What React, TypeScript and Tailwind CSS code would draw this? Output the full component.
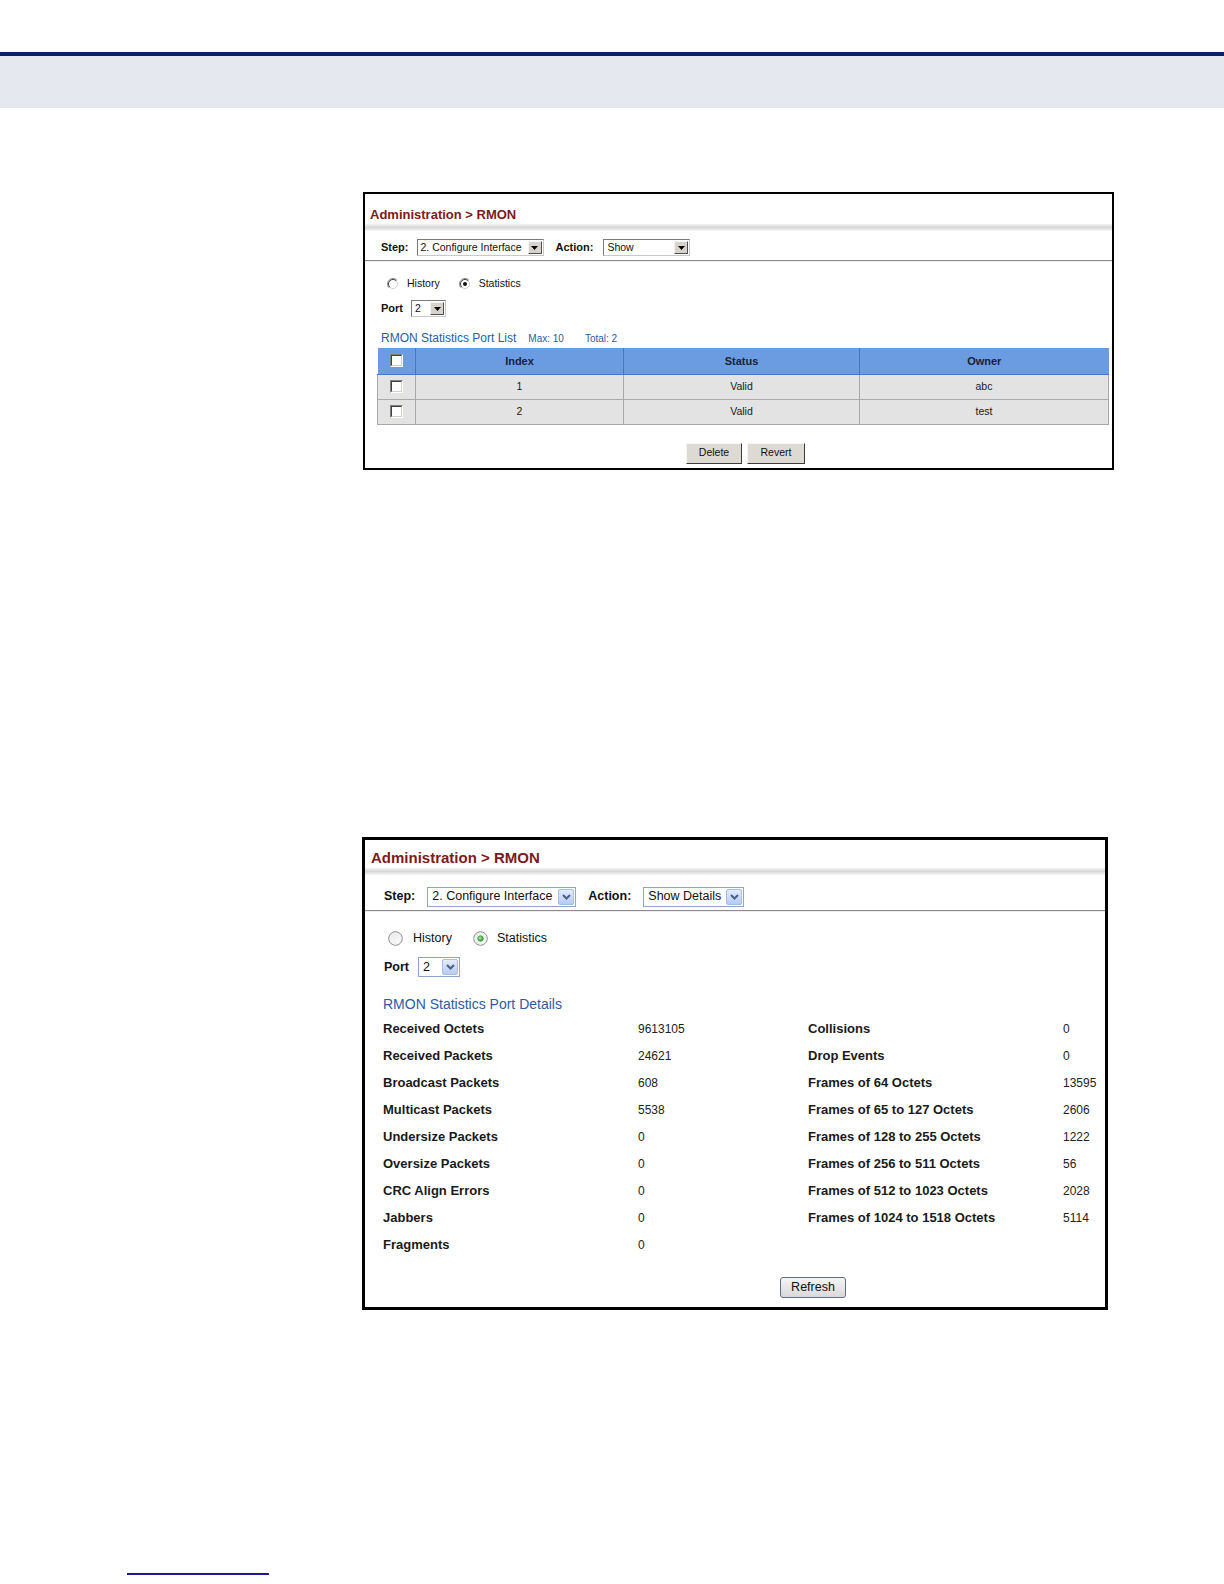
import React from 'react';

const FONT = "font-['Liberation_Sans',Arial,sans-serif]";

function ClassicSelect({ value, w }: { value: string; w: string }) {
  return (
    <div className={`${w} flex h-[17px] items-center border border-t-[#7a7a7a] border-l-[#7a7a7a] border-r-[#c8c8c8] border-b-[#c8c8c8] bg-white`}>
      <span className="flex-1 truncate pl-[3px] text-[10.5px] leading-none text-[#111]">{value}</span>
      <span className="mr-px flex h-[13px] w-[14px] items-center justify-center border border-t-[#f4f4f4] border-l-[#f4f4f4] border-r-[#505050] border-b-[#505050] bg-[#d6d3cc]">
        <svg width="7" height="4" viewBox="0 0 7 4">
          <path d="M0 0h7L3.5 4z" fill="#000" />
        </svg>
      </span>
    </div>
  );
}

function VistaSelect({ value, w }: { value: string; w: string }) {
  return (
    <div className={`${w} flex h-[20px] items-center border border-[#8ea6c8] bg-white p-px`}>
      <span className="flex-1 truncate pl-[3px] text-[12.5px] leading-none text-[#111]">{value}</span>
      <span className="flex h-full w-[16px] items-center justify-center rounded-[2px] border border-[#a6bde6] bg-linear-to-b from-[#e4ecfc] to-[#b6cbf3]">
        <svg width="9" height="6" viewBox="0 0 9 6">
          <path d="M1 1l3.5 3.5L8 1" stroke="#4a5f86" strokeWidth="2" fill="none" />
        </svg>
      </span>
    </div>
  );
}

function ClassicRadio({ checked }: { checked?: boolean }) {
  return (
    <svg width="12" height="12" viewBox="0 0 12 12">
      <circle cx="6" cy="6" r="5" fill="#fff" />
      <path d="M2.11 9.89A5.5 5.5 0 0 1 9.89 2.11" stroke="#8a8a8a" fill="none" />
      <path d="M2.8 9.2A4.5 4.5 0 0 1 9.2 2.8" stroke="#404040" fill="none" />
      <path d="M9.2 2.8A4.5 4.5 0 0 1 2.8 9.2" stroke="#d4d0c8" fill="none" />
      {checked && <circle cx="6" cy="6" r="2" fill="#111" />}
    </svg>
  );
}

function VistaRadio({ checked }: { checked?: boolean }) {
  return (
    <svg width="15" height="15" viewBox="0 0 15 15">
      <defs>
        <linearGradient id="vr" x1="0" y1="0" x2="1" y2="1">
          <stop offset="0" stopColor="#e6e6e6" />
          <stop offset="1" stopColor="#ffffff" />
        </linearGradient>
        <radialGradient id="vg" cx="0.4" cy="0.4" r="0.6">
          <stop offset="0" stopColor="#a6f09a" />
          <stop offset="1" stopColor="#2c9a2a" />
        </radialGradient>
      </defs>
      <circle cx="7.5" cy="7.5" r="6.8" fill="url(#vr)" stroke="#8c8e8f" strokeWidth="1" />
      <circle cx="7.5" cy="7.5" r="5.3" fill="none" stroke="#f2f2f2" strokeWidth="1" />
      {checked && <circle cx="7.5" cy="7.5" r="2.8" fill="url(#vg)" stroke="#3d8a3a" strokeWidth="0.6" />}
    </svg>
  );
}

function ClassicCheckbox() {
  return (
    <span className="block h-[13px] w-[13px] border border-t-[#808080] border-l-[#808080] border-r-white border-b-white">
      <span className="block h-full w-full border border-t-[#404040] border-l-[#404040] border-r-[#d4d0c8] border-b-[#d4d0c8] bg-white" />
    </span>
  );
}

function ClassicButton({ label, w }: { label: string; w: string }) {
  return (
    <div className={`${w} flex h-[21px] items-center justify-center border border-t-[#f5f5f5] border-l-[#f5f5f5] border-r-[#3c3c3c] border-b-[#3c3c3c] bg-[#dcdad3] text-[10.5px] text-[#111]`}>
      {label}
    </div>
  );
}

function SepBar() {
  return <div className="h-[7px] bg-linear-to-b from-[#f3f3f3] via-[#d8d8d8] to-[#f6f6f6]" />;
}

function ListPanel() {
  const rows = [
    { index: '1', status: 'Valid', owner: 'abc' },
    { index: '2', status: 'Valid', owner: 'test' },
  ];
  return (
    <div className="ml-[363px] h-[278px] w-[751px] border-2 border-black bg-white">
      <div className="h-[30px] pl-[5px] pt-[13px]">
        <div className="text-[13px] font-bold leading-[16px] text-[#7d1a1a]">Administration &gt; RMON</div>
      </div>
      <SepBar />
      <div className="flex h-[29px] items-center gap-[6px] pl-[16px] pt-[4px]">
        <span className="text-[11px] font-bold text-[#111]">Step:</span>
        <ClassicSelect value="2. Configure Interface" w="w-[127px] ml-[2px]" />
        <span className="ml-[6px] text-[11px] font-bold text-[#111]">Action:</span>
        <ClassicSelect value="Show" w="w-[87px] ml-[4px]" />
      </div>
      <div className="h-px bg-[#8c8c8c]" />
      <div className="h-px bg-[#eeeeee]" />
      <div className="mt-[14px] flex h-[16px] items-center pl-[22px] text-[10.5px] text-[#111]">
        <ClassicRadio />
        <span className="ml-[8px]">History</span>
        <span className="ml-[19px]"><ClassicRadio checked /></span>
        <span className="ml-[8px]">Statistics</span>
      </div>
      <div className="mt-[8px] flex h-[17px] items-center gap-[6px] pl-[16px]">
        <span className="text-[11px] font-bold text-[#111]">Port</span>
        <ClassicSelect value="2" w="w-[35px] ml-[2px]" />
      </div>
      <div className="mt-[14px] flex h-[14px] items-end pl-[16px] text-[#2b5ca5]">
        <span className="text-[12px] leading-[14px]">RMON Statistics Port List</span>
        <span className="ml-[12px] text-[10px] leading-[13px]">Max: 10</span>
        <span className="ml-[21px] text-[10px] leading-[13px]">Total: 2</span>
      </div>
      <table className="ml-[12px] mt-[3px] w-[732px] border-collapse text-[10.5px]">
        <thead>
          <tr className="h-[26px] bg-[#6b9be0] text-[11px] font-bold text-[#15233d]">
            <th className="w-[38px] border-b border-r border-[#4576c0]">
              <span className="flex justify-center"><ClassicCheckbox /></span>
            </th>
            <th className="w-[208px] border-b border-r border-[#4576c0]">Index</th>
            <th className="w-[236px] border-b border-r border-[#4576c0]">Status</th>
            <th className="border-b border-[#4576c0]">Owner</th>
          </tr>
        </thead>
        <tbody>
          {rows.map((r) => (
            <tr key={r.index} className="h-[25px] bg-[#e3e3e3] text-center text-[#1a1a1a]">
              <td className="border border-[#a9a9a9]">
                <span className="flex justify-center"><ClassicCheckbox /></span>
              </td>
              <td className="border border-[#a9a9a9]">{r.index}</td>
              <td className="border border-[#a9a9a9]">{r.status}</td>
              <td className="border border-[#a9a9a9]">{r.owner}</td>
            </tr>
          ))}
        </tbody>
      </table>
      <div className="ml-[321px] mt-[18px] flex gap-[5px]">
        <ClassicButton label="Delete" w="w-[56px]" />
        <ClassicButton label="Revert" w="w-[58px]" />
      </div>
    </div>
  );
}

const left: [string, string][] = [
  ['Received Octets', '9613105'],
  ['Received Packets', '24621'],
  ['Broadcast Packets', '608'],
  ['Multicast Packets', '5538'],
  ['Undersize Packets', '0'],
  ['Oversize Packets', '0'],
  ['CRC Align Errors', '0'],
  ['Jabbers', '0'],
  ['Fragments', '0'],
];

const right: [string, string][] = [
  ['Collisions', '0'],
  ['Drop Events', '0'],
  ['Frames of 64 Octets', '13595'],
  ['Frames of 65 to 127 Octets', '2606'],
  ['Frames of 128 to 255 Octets', '1222'],
  ['Frames of 256 to 511 Octets', '56'],
  ['Frames of 512 to 1023 Octets', '2028'],
  ['Frames of 1024 to 1518 Octets', '5114'],
  ['', ''],
];

function DetailsPanel() {
  return (
    <div className="ml-[362px] mt-[367px] h-[473px] w-[746px] border-[3px] border-black bg-white">
      <div className="h-[28px] pl-[6px] pt-[9px]">
        <div className="text-[15px] font-bold leading-[18px] text-[#7d1a1a]">Administration &gt; RMON</div>
      </div>
      <SepBar />
      <div className="flex h-[35px] items-center pl-[19px] pt-[8px]">
        <span className="text-[12.5px] font-bold text-[#111]">Step:</span>
        <VistaSelect value="2. Configure Interface" w="w-[149px] ml-[12px]" />
        <span className="ml-[12px] text-[12.5px] font-bold text-[#111]">Action:</span>
        <VistaSelect value="Show Details" w="w-[101px] ml-[12px]" />
      </div>
      <div className="h-px bg-[#8c8c8c]" />
      <div className="h-px bg-[#eeeeee]" />
      <div className="mt-[18px] flex h-[16px] items-center pl-[23px] text-[12.5px] text-[#111]">
        <VistaRadio />
        <span className="ml-[10px]">History</span>
        <span className="ml-[21px]"><VistaRadio checked /></span>
        <span className="ml-[9px]">Statistics</span>
      </div>
      <div className="mt-[11px] flex h-[20px] items-center pl-[19px]">
        <span className="text-[12.5px] font-bold text-[#111]">Port</span>
        <VistaSelect value="2" w="w-[42px] ml-[9px]" />
      </div>
      <div className="mt-[18px] h-[18px] pl-[18px] text-[14px] leading-[18px] text-[#2b5ca5]">
        RMON Statistics Port Details
      </div>
      <div className="mt-[2px] grid auto-rows-[27px] grid-cols-[255px_170px_255px_1fr] items-center pl-[18px]">
        {left.map((l, i) => (
          <React.Fragment key={l[0]}>
            <span className="text-[13px] font-bold text-[#1a1a1a]">{l[0]}</span>
            <span className="text-[12px] text-[#222]">{l[1]}</span>
            <span className="text-[13px] font-bold text-[#1a1a1a]">{right[i][0]}</span>
            <span className="text-[12px] text-[#222]">{right[i][1]}</span>
          </React.Fragment>
        ))}
      </div>
      <div className="ml-[415px] mt-[19px] flex h-[21px] w-[66px] items-center justify-center rounded-[3px] border border-[#5f6f85] bg-linear-to-b from-[#f4f4f4] to-[#d9d9d9] text-[12.5px] text-[#111]">
        Refresh
      </div>
    </div>
  );
}

export default function App() {
  return (
    <div className={`h-[1584px] w-[1224px] overflow-hidden bg-white ${FONT}`}>
      <div className="mt-[52px] h-[4px] bg-[#0b2364]" />
      <div className="h-[52px] bg-[#e5e8ee]" />
      <div className="h-[84px]" />
      <ListPanel />
      <DetailsPanel />
      <div className="ml-[127px] mt-[263px] h-[2px] w-[142px] bg-[#1b1b8f]" />
    </div>
  );
}
